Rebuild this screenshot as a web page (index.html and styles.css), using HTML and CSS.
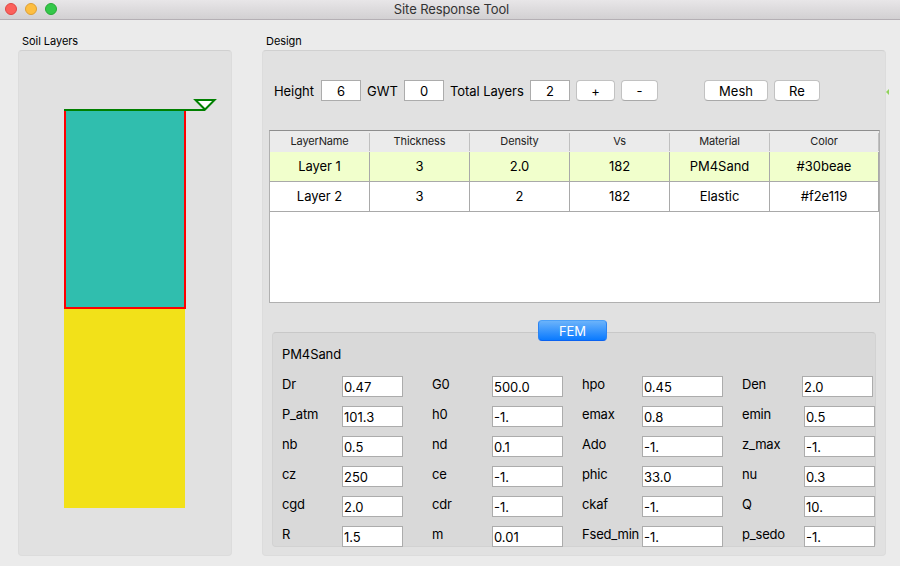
FILE: index.html
```
<!DOCTYPE html>
<html lang="en">
<head>
<meta charset="utf-8">
<title>Site Response Tool</title>
<link rel="stylesheet" href="styles.css">
</head>
<body>
<header class="titlebar">
  <div class="lights"><i class="light red"></i><i class="light amber"></i><i class="light green"></i></div>
  <h1>Site Response Tool</h1>
</header>
<main class="content">
  <section class="soil">
    <h2>Soil Layers</h2>
    <div class="group soil-group">
      <svg class="profile" width="154" height="411" viewBox="0 0 154 411">
        <rect x="0" y="210" width="121" height="200" fill="#f2e119"/>
        <rect x="1" y="12" width="120" height="198" fill="#30beae" stroke="#ff0000" stroke-width="2"/>
        <path d="M0 12H141" stroke="#008000" stroke-width="2"/>
        <path d="M131.500 2H150.500L141 11.500Z" fill="#fff" stroke="#008000" stroke-width="2"/>
      </svg>
    </div>
  </section>
  <section class="design">
    <h2>Design</h2>
    <div class="group design-group">
      <div class="toolbar">
        <label class="t-height">Height</label><input class="field num" value="6">
        <label class="t-gwt">GWT</label><input class="field num" value="0">
        <label class="t-total">Total Layers</label><input class="field num" value="2">
        <button class="btn plus">+</button><button class="btn minus">-</button>
        <button class="btn mesh">Mesh</button><button class="btn re">Re</button>
        <i class="marker"></i>
      </div>
      <div class="table">
        <div class="row head"><span>LayerName</span><span>Thickness</span><span>Density</span><span>Vs</span><span>Material</span><span>Color</span></div>
        <div class="row selected"><span>Layer 1</span><span>3</span><span>2.0</span><span>182</span><span>PM4Sand</span><span>#30beae</span></div>
        <div class="row"><span>Layer 2</span><span>3</span><span>2</span><span>182</span><span>Elastic</span><span>#f2e119</span></div>
      </div>
      <div class="fem">
        <button class="tab">FEM</button>
        <h3>PM4Sand</h3>
        <div class="params">
          <label>Dr</label><input class="field" value="0.47"><label>G0</label><input class="field" value="500.0"><label>hpo</label><input class="field" value="0.45"><label>Den</label><input class="field density" value="2.0">
          <label>P_atm</label><input class="field" value="101.3"><label>h0</label><input class="field" value="-1."><label>emax</label><input class="field" value="0.8"><label>emin</label><input class="field" value="0.5">
          <label>nb</label><input class="field" value="0.5"><label>nd</label><input class="field" value="0.1"><label>Ado</label><input class="field" value="-1."><label>z_max</label><input class="field" value="-1.">
          <label>cz</label><input class="field" value="250"><label>ce</label><input class="field" value="-1."><label>phic</label><input class="field" value="33.0"><label>nu</label><input class="field" value="0.3">
          <label>cgd</label><input class="field" value="2.0"><label>cdr</label><input class="field" value="-1."><label>ckaf</label><input class="field" value="-1."><label>Q</label><input class="field" value="10.">
          <label>R</label><input class="field" value="1.5"><label>m</label><input class="field" value="0.01"><label>Fsed_min</label><input class="field" value="-1."><label>p_sedo</label><input class="field" value="-1.">
        </div>
      </div>
    </div>
  </section>
</main>
</body>
</html>
```
FILE: styles.css
```
* { box-sizing: border-box; }
body {
  margin: 0;
  width: 900px;
  height: 566px;
  overflow: hidden;
  background: #ebebeb;
  color: #000;
  font: 13px/16px Inter, "Liberation Sans", sans-serif;
}
h1, h2, h3 { margin: 0; font-weight: 400; }
.titlebar {
  display: grid;
  grid-template-columns: 1fr auto 1fr;
  align-items: center;
  height: 20px;
  padding: 0 0 1px 5px;
  border-bottom: 1px solid #b4afb4;
  background: linear-gradient(#e8e6e8, #d2d0d2);
}
.titlebar h1 { position: relative; left: -2px; font-size: 13px; line-height: 18px; color: #333; margin-right: -2px; letter-spacing: -0.1px; }
.lights { display: flex; gap: 8px; }
.light { width: 12px; height: 12px; border-radius: 50%; border: 1px solid; }
.light.red { background: #fc605b; border-color: #df4744; }
.light.amber { background: #fdbe41; border-color: #dd9f34; }
.light.green { background: #34c84a; border-color: #27a935; }
.content { display: flex; gap: 30px; padding: 14px 14px 10px 18px; }
.soil { width: 214px; }
.design { width: 624px; }
h2 { height: 16px; padding-left: 4px; font-size: 11px; line-height: 15px; letter-spacing: -0.05px; }
h3 { font-size: 13px; line-height: 16px; height: 16px; letter-spacing: -0.1px; }
.group {
  height: 506px;
  border: 1px solid #dcdcdc;
  border-top-color: #d0d0d0;
  border-radius: 4px;
  background: #e1e1e1;
}
.soil-group { padding: 47px 0 0 45px; }
.profile { display: block; }
.design-group { padding: 29px 5px 0 6px; }
.toolbar { display: flex; align-items: center; height: 21px; padding-left: 5px; position: relative; }
.toolbar label { letter-spacing: -0.06px; }
.t-height { width: 47px; }
.t-gwt { width: 37px; margin-left: 6px; }
.t-total { width: 80px; margin-left: 6px; }
.field {
  height: 21px;
  margin: 0;
  padding: 0 1px;
  border: 1px solid #acacac;
  border-radius: 0;
  outline: 0;
  background: #fff;
  color: #000;
  font: inherit;
}
.num { width: 40px; text-align: center; padding: 1px 1px 0; }
.btn {
  height: 21px;
  margin: 0;
  padding: 0;
  border: 1px solid #c2c2c2;
  border-bottom-color: #a9a9a9;
  border-radius: 4px;
  background: #fff;
  color: #000;
  font: inherit;
  line-height: 18px;
}
.plus { width: 39px; margin-left: 6px; }
.minus { width: 37px; margin-left: 6px; }
.mesh { width: 64px; margin-left: 46px; }
.re { width: 46px; margin-left: 6px; }
.marker {
  position: absolute;
  right: -9px;
  top: 9px;
  border: solid transparent;
  border-width: 3px 3px 3px 0;
  border-right-color: #91d35c;
}
.table {
  width: 611px;
  height: 173px;
  margin-top: 29px;
  border: 1px solid #b0b0b0;
  border-top-color: #8e8e8e;
  background: #fff;
}
.row { display: grid; grid-template-columns: repeat(5, 100px) 109px; height: 30px; letter-spacing: -0.03px; }
.row span { border-right: 1px solid #a9a9a9; border-bottom: 1px solid #a9a9a9; text-align: center; line-height: 29px; }
.row.head { height: 21px; padding: 2px 0 1px; background: #ebebeb; letter-spacing: -0.15px; }
.row.head span { border-bottom: 0; border-color: #c0c0c0; font-size: 11px; line-height: 17px; color: #222; }
.row.selected { background: #f1ffcc; }
.fem {
  width: 604px;
  height: 215px;
  margin: 29px 0 0 3px;
  padding: 13px 0 0 9px;
  border: 1px solid #d2d2d2;
  border-top-color: #c8c8c8;
  border-radius: 4px;
  background: #d9d9d9;
  position: relative;
}
.tab {
  position: absolute;
  left: 265px;
  top: -13px;
  width: 69px;
  height: 21px;
  padding: 0;
  border: 1px solid #2a83f3;
  border-top-color: #4ba0f8;
  border-bottom-color: #0a62f0;
  border-radius: 4px;
  background: linear-gradient(#6bb3fa, #0a7aff);
  color: #fff;
  font: inherit;
}
.params {
  display: grid;
  grid-template-columns: 60px 61px 29px 60px 71px 19px 60px 81px 19px 62px 71px;
  grid-auto-rows: 30px;
  margin-top: 14px;
  align-items: start;
  letter-spacing: -0.2px;
}
.params .field { width: 100%; padding-top: 1px; }
.params .density { margin-left: -2px; }
.params label:nth-of-type(4n+1) { grid-column: 1; }
.params label:nth-of-type(4n+2) { grid-column: 4; }
.params label:nth-of-type(4n+3) { grid-column: 7; }
.params label:nth-of-type(4n) { grid-column: 10; }
```
